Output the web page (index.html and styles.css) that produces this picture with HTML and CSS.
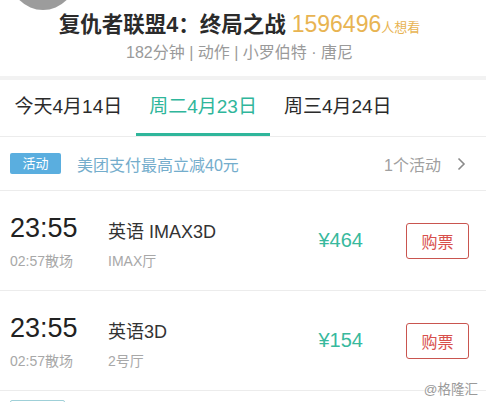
FILE: index.html
```html
<!DOCTYPE html>
<html lang="zh-CN">
<head>
    <meta charset="UTF-8">
    <meta name="viewport" content="width=device-width, initial-scale=1.0">
    <title>复仇者联盟4</title>
    <link rel="stylesheet" href="styles.css">
</head>
<body>
    <div class="page">
        <div class="avatar"></div>
        <div class="movie-head">
            <div class="movie-title">复仇者联盟4：终局之战 <span class="wish">1596496</span><span class="wish-unit">人想看</span></div>
            <div class="movie-meta">182分钟 | 动作 | 小罗伯特 · 唐尼</div>
        </div>

        <div class="date-tabs">
            <div class="tab">今天4月14日</div>
            <div class="tab active">周二4月23日</div>
            <div class="tab">周三4月24日</div>
        </div>

        <div class="promo">
            <span class="promo-tag">活动</span>
            <span class="promo-text">美团支付最高立减40元</span>
            <span class="promo-count">1个活动</span>
            <span class="chevron">
                <svg width="9" height="14" viewBox="0 0 9 14"><path d="M1.5 1.5 L7 7 L1.5 12.5" fill="none" stroke="#8a8a8a" stroke-width="1.6"/></svg>
            </span>
        </div>

        <div class="show">
            <div class="show-time">
                <div class="start">23:55</div>
                <div class="end">02:57散场</div>
            </div>
            <div class="show-info">
                <div class="lang">英语 IMAX3D</div>
                <div class="hall">IMAX厅</div>
            </div>
            <div class="price">¥464</div>
            <button class="buy">购票</button>
        </div>

        <div class="show">
            <div class="show-time">
                <div class="start">23:55</div>
                <div class="end">02:57散场</div>
            </div>
            <div class="show-info">
                <div class="lang">英语3D</div>
                <div class="hall">2号厅</div>
            </div>
            <div class="price">¥154</div>
            <button class="buy">购票</button>
        </div>

        <div class="next-row">
            <span class="next-tag"></span>
        </div>

        <div class="watermark">@格隆汇</div>
    </div>
</body>
</html>
```

FILE: styles.css
```css
html, body {
    margin: 0;
    overflow: hidden;
    background: #fff;
}
.page {
    position: relative;
    width: 486px;
    font-family: "Liberation Sans", "Noto Sans CJK SC", sans-serif;
    color: #333;
}
.avatar {
    position: absolute;
    left: 10px;
    top: -56px;
    width: 66px;
    height: 66px;
    border-radius: 50%;
    background: #9c9c9c;
}
.movie-head {
    height: 80px;
    padding-top: 11px;
    padding-right: 7px;
    box-sizing: border-box;
    text-align: center;
    border-bottom: 4px solid #f2f2f2;
}
.movie-title {
    height: 26px;
    font-size: 21.5px;
    font-weight: bold;
    line-height: 26px;
    white-space: nowrap;
    color: #2b2b2b;
}
.wish {
    font-size: 23px;
    font-weight: normal;
    color: #e8b452;
}
.wish-unit {
    font-size: 13px;
    font-weight: normal;
    color: #e8b452;
}
.movie-meta {
    margin-top: 6px;
    font-size: 16px;
    line-height: 20px;
    color: #9a9a9a;
}
.date-tabs {
    display: flex;
    padding-left: 1px;
    border-bottom: 1px solid #ececec;
}
.tab {
    padding: 14px 13.5px 13px;
    font-size: 19px;
    line-height: 26px;
    color: #2b2b2b;
    border-bottom: 3px solid transparent;
}
.tab.active {
    color: #2fb69b;
    border-bottom-color: #2fb69b;
}
.promo {
    display: flex;
    align-items: center;
    height: 53px;
    padding: 0 20px 0 10px;
    border-bottom: 1px solid #ececec;
}
.promo-tag {
    width: 51px;
    height: 21px;
    line-height: 21px;
    text-align: center;
    border-radius: 2px;
    background: #5aaedf;
    color: #fff;
    font-size: 13px;
}
.promo-text {
    flex: 1;
    margin-left: 16px;
    font-size: 16px;
    color: #74adcc;
}
.promo-count {
    font-size: 16px;
    color: #a0a0a0;
}
.chevron {
    display: flex;
    margin-left: 16px;
}
.show {
    display: flex;
    align-items: center;
    height: 99px;
    padding: 0 17px 0 10px;
    border-bottom: 1px solid #ececec;
}
.show-time {
    width: 98px;
}
.start {
    font-size: 27px;
    line-height: 34px;
    color: #222;
}
.end {
    margin-top: 6px;
    font-size: 14px;
    line-height: 20px;
    color: #a8a8a8;
}
.show-info {
    flex: 1;
    padding-top: 10px;
}
.lang {
    font-size: 18px;
    line-height: 24px;
    color: #333;
}
.hall {
    margin-top: 7px;
    font-size: 14px;
    line-height: 20px;
    color: #a8a8a8;
}
.price {
    font-size: 20px;
    color: #38b99d;
    margin-right: 43px;
}
.buy {
    width: 63px;
    height: 36px;
    padding: 0;
    background: #fff;
    border: 1.5px solid #c9554f;
    border-radius: 3px;
    color: #d8504c;
    font-family: inherit;
    font-size: 16px;
}
.next-row {
    padding: 9px 10px 0;
}
.next-tag {
    display: block;
    width: 53px;
    height: 20px;
    border: 1px solid #9fd0d8;
    border-radius: 2px;
}
.watermark {
    position: absolute;
    right: 8px;
    top: 378px;
    font-size: 13.5px;
    color: #9a9a9a;
    text-shadow: 0 0 2px #fff, 0 0 2px #fff;
}
```
